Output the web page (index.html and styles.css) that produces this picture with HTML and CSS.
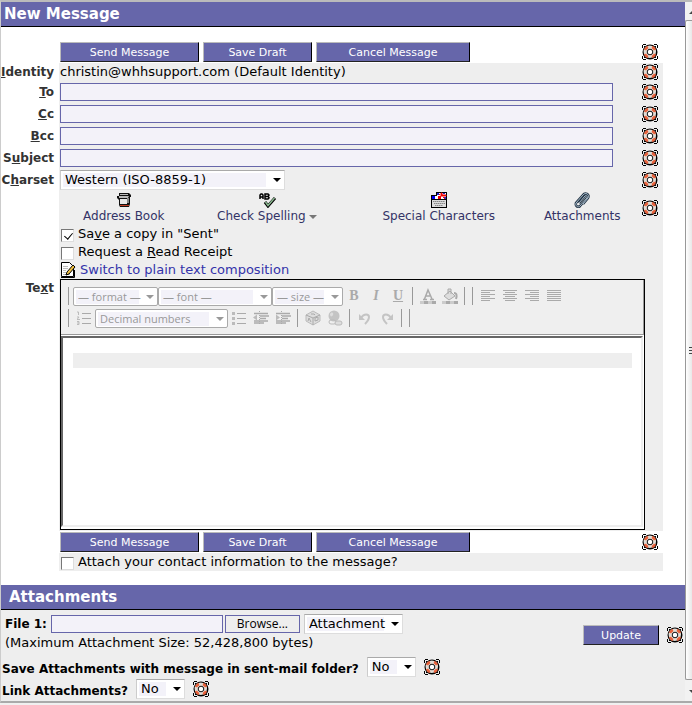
FILE: index.html
```html
<!DOCTYPE html>
<html lang="en">
<head>
    <meta charset="UTF-8">
    <meta name="viewport" content="width=device-width, initial-scale=1.0">
    <title>New Message</title>
    <link rel="stylesheet" href="styles.css">
</head>
<body>
    <!-- Shared icons -->
    <svg class="defs" width="0" height="0" aria-hidden="true">
        <symbol id="help" viewBox="0 0 16 16">
            <path d="M1 0h3v1H1zM0 1h1v3H0zM12 0h3v1h-3zM15 1h1v3h-1zM0 12h1v3H0zM1 15h3v1H1zM15 12h1v3h-1zM12 15h3v1h-3z" fill="#000"/>
            <path d="M2 2h1v1H2zM13 2h1v1h-1zM2 13h1v1H2zM13 13h1v1h-1z" fill="#000"/>
            <circle cx="8" cy="8" r="7.500" fill="#000"/>
            <circle cx="7.800" cy="7.800" r="6.200" fill="#e2ddd6"/>
            <path d="M3 6A5.500 5.500 0 0 1 6 3M10 3a5.500 5.500 0 0 1 3 3M13 10a5.500 5.500 0 0 1-3 3M6 13a5.500 5.500 0 0 1-3-3" fill="none" stroke="#e8623c" stroke-width="2.500"/>
            <circle cx="8" cy="8" r="2.800" fill="#fff" stroke="#111"/>
        </symbol>
    </svg>

    <div class="window">
        <main>
            <h1>New Message</h1>
            <form id="compose">
                <div class="row plain">
                    <div class="field buttons">
                        <button type="button" class="btn send">Send Message</button>
                        <button type="button" class="btn draft">Save Draft</button>
                        <button type="button" class="btn cancel">Cancel Message</button>
                    </div>
                    <a href="#" class="help" aria-label="Help"><svg><use href="#help"/></svg></a>
                </div>
                <div class="row short">
                    <span class="label"><u>I</u>dentity</span>
                    <div class="field">christin@whhsupport.com (Default Identity)</div>
                    <a href="#" class="help" aria-label="Help"><svg><use href="#help"/></svg></a>
                </div>
                <div class="row">
                    <label class="label" for="to"><u>T</u>o</label>
                    <div class="field"><input type="text" class="text" id="to"></div>
                    <a href="#" class="help" aria-label="Help"><svg><use href="#help"/></svg></a>
                </div>
                <div class="row">
                    <label class="label" for="cc"><u>C</u>c</label>
                    <div class="field"><input type="text" class="text" id="cc"></div>
                    <a href="#" class="help" aria-label="Help"><svg><use href="#help"/></svg></a>
                </div>
                <div class="row">
                    <label class="label" for="bcc"><u>B</u>cc</label>
                    <div class="field"><input type="text" class="text" id="bcc"></div>
                    <a href="#" class="help" aria-label="Help"><svg><use href="#help"/></svg></a>
                </div>
                <div class="row">
                    <label class="label" for="subject">S<u>u</u>bject</label>
                    <div class="field"><input type="text" class="text" id="subject"></div>
                    <a href="#" class="help" aria-label="Help"><svg><use href="#help"/></svg></a>
                </div>
                <div class="row">
                    <label class="label" for="charset">C<u>h</u>arset</label>
                    <div class="field">
                        <span class="select charset"><select id="charset"><option>Western (ISO-8859-1)</option></select></span>
                    </div>
                    <a href="#" class="help" aria-label="Help"><svg><use href="#help"/></svg></a>
                </div>
                <div class="row tools">
                    <nav class="field actions">
                        <a href="#">
                            <svg width="16" height="16" viewBox="0 0 16 16">
                                <path d="M3 1h10l2 2v2h-1v7l-1 3H4l-1-2V8L1 6V4h2z" fill="#111"/>
                                <path d="M4 2h8v1H4zM3 4h10l-1 2H3z" fill="#bbb"/>
                                <path d="M4 7h7v5H4z" fill="#e8e8e8"/>
                                <path d="M11 6h2v5h-2z" fill="#888"/>
                                <path d="M4 13h9v1H4z" fill="#c03a20"/>
                            </svg>
                            Address Book
                        </a>
                        <a href="#">
                            <svg width="20" height="16" viewBox="0 0 20 16">
                                <path d="M3 7V3l1-1h1l1 1v4M3 5h3M8 7V2h3l1 1-1 1.500 1 1V6l-1 1zM8 4.500h3" fill="none" stroke="#000" stroke-width="1.500"/>
                                <path d="M8 10l3 4 7-8" fill="none" stroke="#000" stroke-width="3"/>
                                <path d="M8.500 10l2.500 3.500L17.500 6" fill="none" stroke="#8ab890" stroke-width="1.500"/>
                            </svg>
                            <span>Check Spelling <i class="arrow"></i></span>
                        </a>
                        <a href="#">
                            <svg width="16" height="16" viewBox="0 0 16 16">
                                <path d="M5 0h11v16H0V3h5z" fill="#000"/>
                                <path d="M6 1h9v6H6z" fill="#fff"/>
                                <path d="M6 1h2v2H6zM12 1h2v1h-2zM13 5h2v2h-2z" fill="#22c"/>
                                <path d="M10 1h1v2h4v1h-5zM8 2l1 1M12 5l2 2" fill="#e00" stroke="#e00"/>
                                <path d="M1 4h3v3H1z" fill="#00e"/>
                                <path d="M4 4h3v3H4z" fill="#fff"/>
                                <path d="M7 4h3v3H7z" fill="#e00"/>
                                <path d="M1 8h14v7H1z" fill="#ddd"/>
                                <path d="M2 9.500h12M3 11.500h11M4 13.500h8" stroke="#888" stroke-dasharray="1.500 .5"/>
                            </svg>
                            Special Characters
                        </a>
                        <a href="#">
                            <svg width="16" height="16" viewBox="0 0 16 16">
                                <path d="M5 11l6-7c1-1 3 0 2 2l-7 8c-2 2-5 0-4-3l7-8c2-3 7-1 5 3l-5 6" fill="none" stroke="#234" stroke-width="2.500"/>
                                <path d="M5 11l6-7c1-1 3 0 2 2l-7 8c-2 2-5 0-4-3l7-8c2-3 7-1 5 3l-5 6" fill="none" stroke="#a9bccb"/>
                            </svg>
                            Attachments
                        </a>
                    </nav>
                    <a href="#" class="help" aria-label="Help"><svg><use href="#help"/></svg></a>
                </div>
                <div class="row short">
                    <div class="field check"><input type="checkbox" id="save-copy" checked><label for="save-copy">Sa<u>v</u>e a copy in "Sent"</label></div>
                    <span class="help"></span>
                </div>
                <div class="row short">
                    <div class="field check"><input type="checkbox" id="receipt"><label for="receipt">Request a <u>R</u>ead Receipt</label></div>
                    <span class="help"></span>
                </div>
                <div class="row short">
                    <div class="field">
                        <a href="#" class="switch">
                            <svg width="16" height="16" viewBox="0 0 16 16">
                                <path d="M1.500.5h8l4 4v10h-12z" fill="#fff" stroke="#000"/>
                                <path d="M1 15.500h13.500V8" fill="none" stroke="#000"/>
                                <path d="M3 4.500h5M3 6.500h5M3 8.500h3M3 10.500h3M3 12.500h7" stroke="#bbb"/>
                                <path d="M6 13l1-3 6-7 2 2-6 7z" fill="#f0c040" stroke="#000"/>
                            </svg>
                            Switch to plain text composition
                        </a>
                    </div>
                    <span class="help"></span>
                </div>
                <div class="row message">
                    <label class="label" for="body">Te<u>x</u>t</label>
                    <div class="editor-cell">
                        <div class="editor">
                            <div class="toolbar">
                                <div class="tool-row">
                                    <span class="sep"></span>
                                    <span class="select small format"><select aria-label="Format" disabled><option>— format —</option></select></span>
                                    <span class="select small font"><select aria-label="Font" disabled><option>— font —</option></select></span>
                                    <span class="select small size"><select aria-label="Size" disabled><option>— size —</option></select></span>
                                    <button type="button" class="tool bold" disabled>B</button>
                                    <button type="button" class="tool italic" disabled>I</button>
                                    <button type="button" class="tool under" disabled>U</button>
                                    <span class="sep"></span>
                                    <button type="button" class="tool" aria-label="Font color" disabled>
                                        <svg width="16" height="16" viewBox="0 0 16 16"><path d="M3 11.500h4M10 11.500h4M4.500 11L8 2l4 9M6 8h4" fill="none" stroke="#aaa" stroke-width="1.500"/><path d="M0 13h16v3H0z" fill="#ccc"/><path d="M4 13h4v3H4zM12 13h4v3h-4z" fill="#aaa"/></svg>
                                    </button>
                                    <button type="button" class="tool" aria-label="Background color" disabled>
                                        <svg width="16" height="16" viewBox="0 0 16 16"><path d="M2 8l6-5 5 5-6 4zM6 6V1h3v5" fill="#ddd" stroke="#aaa"/><path d="M12 5c3 0 3 3 2 6" fill="none" stroke="#aaa" stroke-width="2"/><path d="M0 13h16v3H0z" fill="#ccc"/><path d="M4 13h4v3H4zM12 13h4v3h-4z" fill="#aaa"/></svg>
                                    </button>
                                    <span class="sep"></span>
                                    <span class="sep"></span>
                                    <button type="button" class="tool" aria-label="Align left" disabled>
                                        <svg width="14" height="12" viewBox="0 0 14 12"><path d="M0 .5h14M0 2.500h9M0 4.500h14M0 6.500h9M0 8.500h14M0 10.500h9" stroke="#aaa"/></svg>
                                    </button>
                                    <button type="button" class="tool" aria-label="Align center" disabled>
                                        <svg width="14" height="12" viewBox="0 0 14 12"><path d="M0 .5h14M2 2.500h10M0 4.500h14M2 6.500h10M0 8.500h14M2 10.500h10" stroke="#aaa"/></svg>
                                    </button>
                                    <button type="button" class="tool" aria-label="Align right" disabled>
                                        <svg width="14" height="12" viewBox="0 0 14 12"><path d="M0 .5h14M5 2.500h9M0 4.500h14M5 6.500h9M0 8.500h14M5 10.500h9" stroke="#aaa"/></svg>
                                    </button>
                                    <button type="button" class="tool" aria-label="Justify" disabled>
                                        <svg width="14" height="12" viewBox="0 0 14 12"><path d="M0 .5h14M0 2.500h14M0 4.500h14M0 6.500h14M0 8.500h14M0 10.500h14" stroke="#aaa"/></svg>
                                    </button>
                                </div>
                                <div class="tool-row">
                                    <span class="sep"></span>
                                    <button type="button" class="tool" aria-label="Numbered list" disabled>
                                        <svg width="14" height="14" viewBox="0 0 14 14"><path d="M5 2.500h9M5 7.500h9M5 12.500h9" stroke="#aaa"/><path d="M0 1h1.500v3M0 6h2L0 8.500h3M0 10.500h2v3H0M0 12h2" fill="none" stroke="#bbb"/></svg>
                                    </button>
                                    <span class="select small numbers"><select aria-label="List style" disabled><option>Decimal numbers</option></select></span>
                                    <button type="button" class="tool" aria-label="Bulleted list" disabled>
                                        <svg width="14" height="14" viewBox="0 0 14 14"><path d="M5 2.500h9M5 7.500h9M5 12.500h9" stroke="#aaa"/><path d="M0 1h3v3H0zM0 6h3v3H0zM0 11h3v3H0z" fill="#bbb"/></svg>
                                    </button>
                                    <button type="button" class="tool" aria-label="Outdent" disabled>
                                        <svg width="16" height="14" viewBox="0 0 16 14"><path d="M1 2.500h14M7 5h9M7 7.500h6M1 10h14M1 12h10" stroke="#aaa" stroke-width="1.500"/><path d="M6.500 0v14" stroke="#aaa" stroke-dasharray="1 1"/><path d="M0 6.500l4-3v6z" fill="#bbb"/></svg>
                                    </button>
                                    <button type="button" class="tool" aria-label="Indent" disabled>
                                        <svg width="16" height="14" viewBox="0 0 16 14"><path d="M1 2.500h14M7 5h9M7 7.500h6M1 10h14M1 12h10" stroke="#aaa" stroke-width="1.500"/><path d="M6.500 0v14" stroke="#aaa" stroke-dasharray="1 1"/><path d="M5 6.500l-4-3v6z" fill="#bbb"/></svg>
                                    </button>
                                    <span class="sep"></span>
                                    <button type="button" class="tool" aria-label="Insert character" disabled>
                                        <svg width="16" height="16" viewBox="0 0 16 16"><path d="M1 5l7-4 7 4v6l-7 4-7-4z" fill="#ddd" stroke="#bbb"/><path d="M1 5l7 3 7-3M8 8v7M6 4h3l1 1M3 11l1-3 2 4M10 11V8l3-1v3z" fill="none" stroke="#aaa"/></svg>
                                    </button>
                                    <button type="button" class="tool" aria-label="Insert link" disabled>
                                        <svg width="16" height="16" viewBox="0 0 16 16"><circle cx="7" cy="6" r="5.500" fill="#c4c4c4"/><path d="M3 4c2-3 4-1 3 1S3 7 3 4z" fill="#ddd"/><rect x="2" y="10" width="7" height="4" rx="2" fill="none" stroke="#bbb"/><rect x="8" y="11" width="7" height="4" rx="2" fill="#ddd" stroke="#bbb"/></svg>
                                    </button>
                                    <span class="sep"></span>
                                    <button type="button" class="tool" aria-label="Undo" disabled>
                                        <svg width="14" height="14" viewBox="0 0 14 14"><path d="M3 7c3-5 8-4 8-1 0 2-1 4-4 7" fill="none" stroke="#c4c4c4" stroke-width="2"/><path d="M1 3v6h6z" fill="#c4c4c4"/></svg>
                                    </button>
                                    <button type="button" class="tool" aria-label="Redo" disabled>
                                        <svg width="14" height="14" viewBox="0 0 14 14"><path d="M11 7C8 2 3 3 3 6c0 2 1 4 4 7" fill="none" stroke="#c4c4c4" stroke-width="2"/><path d="M13 3v6H7z" fill="#c4c4c4"/></svg>
                                    </button>
                                    <span class="sep"></span>
                                    <span class="sep"></span>
                                </div>
                            </div>
                            <div class="page">
                                <textarea id="body" rows="1"></textarea>
                            </div>
                        </div>
                    </div>
                </div>
                <div class="row plain">
                    <div class="field buttons">
                        <button type="button" class="btn send">Send Message</button>
                        <button type="button" class="btn draft">Save Draft</button>
                        <button type="button" class="btn cancel">Cancel Message</button>
                    </div>
                    <a href="#" class="help" aria-label="Help"><svg><use href="#help"/></svg></a>
                </div>
                <div class="row short">
                    <div class="field check"><input type="checkbox" id="vcard"><label for="vcard">Attach your contact information to the message?</label></div>
                    <span class="help"></span>
                </div>
            </form>

            <h2>Attachments</h2>
            <form id="attachments">
                <div class="upload">
                    <div class="file">
                        <div class="file-row">
                            <label for="file1">File 1:</label>
                            <input type="text" class="text" id="file1">
                            <button type="button" class="browse">Browse...</button>
                            <span class="select disposition"><select aria-label="Disposition"><option>Attachment</option></select></span>
                        </div>
                        <div class="limit">(Maximum Attachment Size: 52,428,800 bytes)</div>
                    </div>
                    <button type="button" class="btn update">Update</button>
                    <a href="#" class="help" aria-label="Help"><svg><use href="#help"/></svg></a>
                </div>
                <div class="option">
                    <label for="save-att">Save Attachments with message in sent-mail folder?</label>
                    <span class="select yesno"><select id="save-att"><option>No</option></select></span>
                    <a href="#" class="help" aria-label="Help"><svg><use href="#help"/></svg></a>
                </div>
                <div class="option">
                    <label for="link-att">Link Attachments?</label>
                    <span class="select yesno"><select id="link-att"><option>No</option></select></span>
                    <a href="#" class="help" aria-label="Help"><svg><use href="#help"/></svg></a>
                </div>
            </form>
        </main>
        <div class="scrollbar">
            <i class="up"></i>
            <div class="thumb"><i></i><i></i><i></i></div>
            <i class="down"></i>
        </div>
    </div>
</body>
</html>
```
FILE: styles.css
```css
* {
    box-sizing: border-box;
}

body {
    margin: 0;
    background: #f0f0f0;
    color: #000;
    font-family: Verdana, "DejaVu Sans", sans-serif;
    font-size: 13px;
    line-height: 18px;
    overflow: hidden;
}

.defs {
    position: absolute;
}

.window {
    display: flex;
    background: #fff;
    border-top: 2px solid #bbb;
    border-left: 1px solid #ccc;
    border-bottom: 2px solid #aaa;
}

main {
    flex: 1;
    min-width: 0;
}

h1, h2 {
    margin: 0;
    padding: 0 3px;
    height: 25px;
    line-height: 25px;
    font-size: 15px;
    color: #fff;
    background: #6666aa;
    border-bottom: 1px solid #000;
}

h2 {
    padding: 0 8px;
}

#compose {
    margin: 14px 22px 14px 0;
}

/* label | field | help */
.row {
    display: grid;
    grid-template-columns: 58px 1fr 21px;
    min-height: 22px;
}

.row.short {
    min-height: 18px;
}

.label {
    grid-column: 1;
    align-self: center;
    padding-right: 5px;
    text-align: right;
    font-size: 12px;
    font-weight: bold;
    color: #333;
}

.field {
    grid-column: 2;
    display: flex;
    align-items: center;
    padding-left: 1px;
    background: #eee;
}

.row > .help {
    grid-column: 3;
    background: #eee;
}

.help {
    display: flex;
    align-items: center;
}

.help svg {
    width: 16px;
    height: 16px;
}

.row.plain .field,
.row.plain .help {
    background: none;
}

.buttons {
    gap: 4px;
}

.btn {
    height: 20px;
    padding: 0;
    font-family: inherit;
    font-size: 11px;
    color: #fff;
    background: #6666aa;
    border: 1px solid;
    border-color: #bbb #000 #222 #bbb;
}

.send {
    width: 139px;
}

.draft {
    width: 109px;
}

.cancel {
    width: 154px;
}

.text {
    width: 95%;
    height: 18px;
    padding: 0 2px;
    font: inherit;
    background: #f3f2f9;
    border: 1px solid #6666aa;
}

/* Drop-downs */
.select {
    position: relative;
    display: inline-flex;
}

.select::after {
    content: "";
    position: absolute;
    right: 4px;
    top: 8px;
    border: 4px solid transparent;
    border-top-color: #000;
    border-bottom: 0;
    pointer-events: none;
}

select {
    appearance: none;
    width: 100%;
    height: 20px;
    padding: 0 4px;
    font: inherit;
    color: #000;
    border: 1px solid;
    border-radius: 0;
    border-color: #aaa #ddd #ddd #ccc;
    background: #fff linear-gradient(#f3f2f9, #f3f2f9) no-repeat 2px 2px / calc(100% - 20px) 14px;
}

.charset {
    width: 225px;
}

.disposition {
    width: 99px;
}

.yesno {
    width: 49px;
}

.select.small {
    font-family: Tahoma, "Open Sans", sans-serif;
    font-size: 11px;
}

.small select {
    height: 19px;
    color: #999;
    opacity: 1;
    border: 1px solid #aaa;
    border-radius: 2px;
}

.select.small::after {
    border-top-color: #999;
}

.format {
    width: 85px;
}

.font {
    width: 114px;
}

.size {
    width: 71px;
}

.numbers {
    width: 133px;
}

/* Icon links under the header fields */
.row.tools {
    min-height: 34px;
}

.actions {
    display: grid;
    grid-template-columns: 128fr 160fr 184fr 104fr;
    padding-right: 8px;
    font-size: 12px;
    line-height: 16px;
}

.actions a {
    display: flex;
    flex-direction: column;
    align-items: center;
    color: #333366;
    text-decoration: none;
    white-space: nowrap;
}

.arrow {
    display: inline-block;
    border: 4px solid transparent;
    border-top-color: #777;
    border-bottom: 0;
    vertical-align: middle;
}

.check {
    gap: 4px;
}

input[type="checkbox"] {
    appearance: none;
    width: 13px;
    height: 13px;
    margin: 2px 0 0 1px;
    background: #fff;
    border: 1px solid;
    border-color: #777 #ddd #ddd #777;
}

input[type="checkbox"]:checked::before {
    content: "";
    display: block;
    width: 4px;
    height: 7px;
    margin: 1px 0 0 4px;
    border: solid #000;
    border-width: 0 1px 1px 0;
    transform: rotate(40deg);
}

.switch {
    display: flex;
    align-items: center;
    gap: 4px;
    color: #3333aa;
    text-decoration: none;
}

/* Editor */
.message .label {
    align-self: start;
}

.editor-cell {
    grid-column: 2 / 4;
    padding: 0 18px 1px 1px;
    background: #eee;
}

.editor {
    border: 1px solid #000;
    background: #fff;
}

.toolbar {
    padding: 5px 4px;
    background: #efefef;
    border: solid #999;
    border-width: 0 1px 1px 0;
}

.tool-row {
    display: flex;
    align-items: center;
    height: 22px;
}

.sep {
    width: 8px;
    height: 18px;
    border-left: 3px solid transparent;
    background: linear-gradient(#999, #999) no-repeat 0 0 / 1px 100%;
}

.tool {
    display: flex;
    align-items: center;
    justify-content: center;
    width: 22px;
    height: 22px;
    padding: 0;
    font-family: "Liberation Serif", serif;
    font-size: 14px;
    font-weight: bold;
    color: #aaa;
    background: none;
    border: 0;
}

.italic {
    font-style: italic;
}

.under {
    text-decoration: underline;
}

.page {
    height: 191px;
    margin: 1px 1px 2px 0;
    padding: 15px 9px 15px 10px;
    border: 2px solid;
    border-color: #666 #eee #eee #666;
}

.page textarea {
    display: block;
    width: 100%;
    height: 15px;
    padding: 0;
    font: inherit;
    background: #eee;
    border: 0;
    resize: none;
    overflow: hidden;
}

/* Attachments */
#attachments {
    padding-bottom: 1px;
    background: #eee;
}

.upload {
    display: flex;
    align-items: center;
    padding: 4px 2px 0 4px;
}

.file {
    flex: 1;
}

.file-row {
    display: flex;
    align-items: center;
}

.file-row label {
    font-size: 12px;
    font-weight: bold;
}

.file-row .text {
    width: 172px;
    margin: 0 2px 0 4px;
}

.browse {
    width: 75px;
    height: 18px;
    margin-right: 4px;
    padding: 0;
    font-family: Tahoma, "Open Sans", sans-serif;
    font-size: 12px;
    line-height: 16px;
    background: #eee;
    border: 1px solid #6666aa;
}

.limit {
    height: 22px;
}

.update {
    width: 76px;
    margin-right: 8px;
}

.option {
    display: flex;
    align-items: center;
    height: 22px;
    padding-left: 1px;
}

.option label {
    padding-top: 4px;
    font-size: 12px;
    font-weight: bold;
}

.option .select {
    margin: 0 8px;
}

/* Scrollbar */
.scrollbar {
    display: flex;
    flex-direction: column;
    width: 7px;
    background: #f2f2f2;
    overflow: hidden;
}

.scrollbar .up,
.scrollbar .down {
    width: 8px;
    margin-left: 4px;
    border: 4px solid transparent;
}

.scrollbar .up {
    height: 12px;
    margin-bottom: 6px;
    border-bottom-color: #444;
}

.scrollbar .down {
    height: 8px;
    margin-top: 10px;
    margin-bottom: 3px;
    border-top-color: #444;
}

.thumb {
    flex: 1;
    display: flex;
    flex-direction: column;
    align-items: flex-end;
    justify-content: center;
    gap: 2px;
    border: 1px solid #999;
    border-right: 0;
    border-radius: 2px 0 0 2px;
    background: linear-gradient(90deg, #fff, #e8e8e8);
}

.thumb i {
    width: 3px;
    height: 1px;
    background: #444;
}
```
